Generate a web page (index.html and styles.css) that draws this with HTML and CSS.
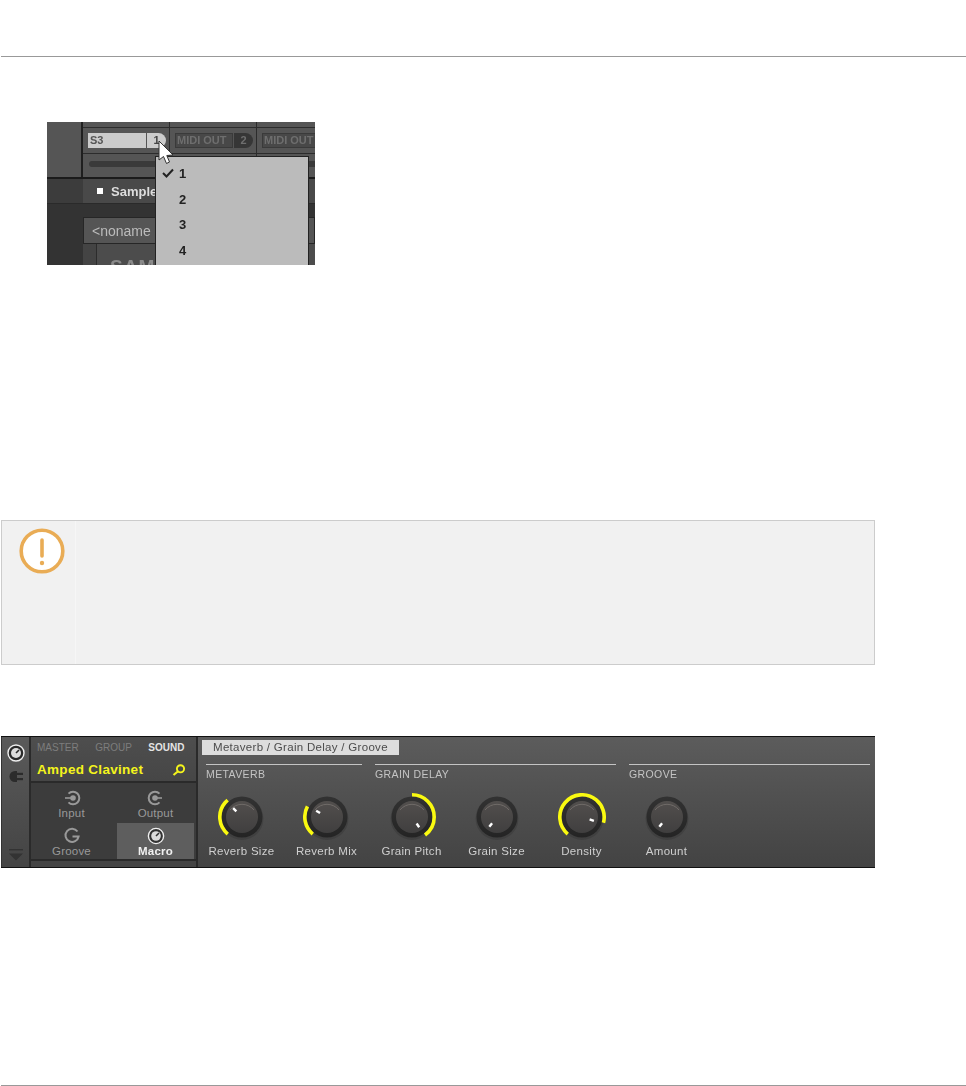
FILE: index.html
```html
<!DOCTYPE html>
<html lang="en">

<head>
    <meta charset="UTF-8">
    <title>Manual page</title>
    <link rel="stylesheet" href="styles.css">
</head>

<body>
    <svg class="defs" width="0" height="0">
        <defs>
            <linearGradient id="knobRing" x1="0" y1="0" x2="0" y2="1">
                <stop offset="0" stop-color="#323232" />
                <stop offset="1" stop-color="#242424" />
            </linearGradient>
            <linearGradient id="knobFace" x1="0" y1="0" x2="0" y2="1">
                <stop offset="0" stop-color="#524f4d" />
                <stop offset="1" stop-color="#403f3f" />
            </linearGradient>
            <g id="knobBody">
                <circle cx="24" cy="25.5" r="21.5" fill="#000" opacity="0.12" />
                <circle cx="24" cy="24" r="20.5" fill="url(#knobRing)" />
                <circle cx="24" cy="24" r="16" fill="url(#knobFace)" />
                <path d="M12 17 A15.5 15.5 0 0 1 36 17" fill="none" stroke="#77726e" stroke-width="0.8" />
            </g>
        </defs>
    </svg>

    <div class="rule"></div>

    <!-- channel strip crop -->
    <div class="crop">
        <div class="crop-strips">
            <div class="crop-corner"></div>
            <div class="strip">
                <div class="strip-top"></div>
                <div class="strip-slot">
                    <span class="field field-on">S3</span>
                    <span class="port port-on">1</span>
                </div>
                <div class="strip-slider"><span class="slider"></span></div>
            </div>
            <div class="strip">
                <div class="strip-top"></div>
                <div class="strip-slot">
                    <span class="field">MIDI OUT</span>
                    <span class="port">2</span>
                </div>
                <div class="strip-slider"><span class="slider"></span></div>
            </div>
            <div class="strip">
                <div class="strip-top"></div>
                <div class="strip-slot">
                    <span class="field">MIDI OUT</span>
                </div>
                <div class="strip-slider"><span class="slider"></span></div>
            </div>
        </div>
        <div class="sample-row">
            <div class="sample-gap"></div>
            <div class="sample-cell"><span class="sample-dot"></span>Sample</div>
        </div>
        <div class="name-area">
            <div class="name-tab">&lt;noname</div>
            <div class="sam-row">
                <div class="sam-gap"></div>
                <div class="sam-cell">SAM</div>
            </div>
        </div>

        <ul class="menu">
            <li class="menu-item">
                <svg class="check" width="12" height="10" viewBox="0 0 12 10">
                    <path d="M1 5 L4.5 8.5 L11 1.5" fill="none" stroke="#222" stroke-width="2" />
                </svg>
                1
            </li>
            <li class="menu-item">2</li>
            <li class="menu-item">3</li>
            <li class="menu-item">4</li>
        </ul>

        <svg class="pointer" width="20" height="26" viewBox="0 0 20 26">
            <path d="M2 1 L2 20 L6.5 16.5 L9.5 23.5 L12.5 22 L9.8 15.5 L16 15 Z" fill="#fff" stroke="#333" stroke-width="1" />
        </svg>
    </div>

    <!-- attention box -->
    <div class="notice">
        <div class="notice-side">
            <svg width="46" height="46" viewBox="0 0 46 46">
                <circle cx="23" cy="23" r="20.8" fill="#fff" stroke="#e9ac55" stroke-width="3.6" />
                <line x1="23" y1="12" x2="23" y2="28" stroke="#e9ac55" stroke-width="3.6" stroke-linecap="round" />
                <circle cx="23" cy="35" r="2.2" fill="#e9ac55" />
            </svg>
        </div>
        <div class="notice-body"></div>
    </div>

    <!-- plug-in panel -->
    <div class="panel">
        <div class="panel-rail">
            <svg class="rail-knob" width="18" height="18" viewBox="0 0 18 18">
                <circle cx="9" cy="9" r="8" fill="#2a2a2a" stroke="#eee" stroke-width="1.4" />
                <circle cx="9" cy="9" r="5" fill="#ddd" />
                <line x1="9" y1="9" x2="12" y2="6" stroke="#2a2a2a" stroke-width="1.6" />
            </svg>
            <svg class="rail-plug" width="14" height="11" viewBox="0 0 14 11">
                <path d="M6 0 A5.5 5.5 0 0 0 6 11 L8 11 L8 0 Z" fill="#2b2b2b" />
                <rect x="8" y="1.8" width="6" height="2.2" fill="#2b2b2b" />
                <rect x="8" y="7" width="6" height="2.2" fill="#2b2b2b" />
            </svg>
            <svg class="rail-arrow" width="14" height="12" viewBox="0 0 14 12">
                <rect x="0" y="0" width="14" height="1.4" fill="#333" />
                <path d="M0 4.5 L14 4.5 L7 11.5 Z" fill="#333" />
            </svg>
        </div>

        <div class="panel-nav">
            <div class="nav-head">
                <div class="nav-tabs">
                    <span>MASTER</span>
                    <span>GROUP</span>
                    <span class="nav-active">SOUND</span>
                </div>
                <div class="nav-title">
                    <span>Amped Clavinet</span>
                    <svg width="14" height="12" viewBox="0 0 14 12">
                        <circle cx="8.5" cy="4.8" r="3.6" fill="none" stroke="#f4f41c" stroke-width="1.9" />
                        <line x1="5.8" y1="7.5" x2="1.5" y2="11" stroke="#f4f41c" stroke-width="2.2" />
                    </svg>
                </div>
            </div>
            <div class="nav-grid">
                <div class="nav-cell">
                    <svg width="18" height="18" viewBox="0 0 18 18">
                        <path d="M5.5 4.6 A6.3 6.3 0 1 1 5.5 13.4" fill="none" stroke="#999" stroke-width="2" />
                        <circle cx="10" cy="9" r="2.8" fill="#999" />
                        <line x1="2" y1="9" x2="9" y2="9" stroke="#999" stroke-width="1.6" />
                    </svg>
                    <span>Input</span>
                </div>
                <div class="nav-cell">
                    <svg width="18" height="18" viewBox="0 0 18 18">
                        <path d="M12.5 4.6 A6.3 6.3 0 1 0 12.5 13.4" fill="none" stroke="#999" stroke-width="2" />
                        <circle cx="8" cy="9" r="2.8" fill="#999" />
                        <line x1="9" y1="9" x2="15" y2="9" stroke="#999" stroke-width="1.6" />
                    </svg>
                    <span>Output</span>
                </div>
                <div class="nav-cell">
                    <svg width="18" height="18" viewBox="0 0 18 18">
                        <path d="M14.5 4.5 A6.6 6.6 0 1 0 15.6 9.5 L9.5 9.5" fill="none" stroke="#999" stroke-width="2" />
                    </svg>
                    <span>Groove</span>
                </div>
                <div class="nav-cell nav-cell-on">
                    <svg width="18" height="18" viewBox="0 0 18 18">
                        <circle cx="9" cy="9" r="7.6" fill="#333" stroke="#eee" stroke-width="1.4" />
                        <circle cx="9" cy="9" r="4.8" fill="#ddd" />
                        <line x1="9" y1="9" x2="12" y2="6" stroke="#333" stroke-width="1.6" />
                    </svg>
                    <span>Macro</span>
                </div>
            </div>
            <div class="nav-foot"></div>
        </div>

        <div class="panel-main">
            <div class="page-tab">Metaverb / Grain Delay / Groove</div>
            <div class="sections">
                <h3 class="section section-metaverb">METAVERB</h3>
                <h3 class="section section-delay">GRAIN DELAY</h3>
                <h3 class="section section-groove">GROOVE</h3>
            </div>
            <div class="knobs">
                <div class="knob">
                    <svg width="48" height="48" viewBox="0 0 48 48">
                        <use href="#knobBody" />
                        <circle class="arc" cx="24" cy="24" r="22.2" pathLength="360" stroke-dasharray="100 360" transform="rotate(130 24 24)" />
                        <line class="tick" x1="24" y1="16" x2="24" y2="11.5" transform="rotate(-45 24 24)" />
                    </svg>
                    <span>Reverb Size</span>
                </div>
                <div class="knob">
                    <svg width="48" height="48" viewBox="0 0 48 48">
                        <use href="#knobBody" />
                        <circle class="arc" cx="24" cy="24" r="22.2" pathLength="360" stroke-dasharray="78 360" transform="rotate(130 24 24)" />
                        <line class="tick" x1="24" y1="16" x2="24" y2="11.5" transform="rotate(-60 24 24)" />
                    </svg>
                    <span>Reverb Mix</span>
                </div>
                <div class="knob">
                    <svg width="48" height="48" viewBox="0 0 48 48">
                        <use href="#knobBody" />
                        <circle class="arc" cx="24" cy="24" r="22.2" pathLength="360" stroke-dasharray="144 360" transform="rotate(-90 24 24)" />
                        <line class="tick" x1="24" y1="16" x2="24" y2="11.5" transform="rotate(145 24 24)" />
                    </svg>
                    <span>Grain Pitch</span>
                </div>
                <div class="knob">
                    <svg width="48" height="48" viewBox="0 0 48 48">
                        <use href="#knobBody" />
                        <line class="tick" x1="24" y1="16" x2="24" y2="11.5" transform="rotate(218 24 24)" />
                    </svg>
                    <span>Grain Size</span>
                </div>
                <div class="knob">
                    <svg width="48" height="48" viewBox="0 0 48 48">
                        <use href="#knobBody" />
                        <circle class="arc" cx="24" cy="24" r="22.2" pathLength="360" stroke-dasharray="245 360" transform="rotate(130 24 24)" />
                        <line class="tick" x1="24" y1="16" x2="24" y2="11.5" transform="rotate(108 24 24)" />
                    </svg>
                    <span>Density</span>
                </div>
                <div class="knob">
                    <svg width="48" height="48" viewBox="0 0 48 48">
                        <use href="#knobBody" />
                        <line class="tick" x1="24" y1="16" x2="24" y2="11.5" transform="rotate(218 24 24)" />
                    </svg>
                    <span>Amount</span>
                </div>
            </div>
        </div>
    </div>

    <div class="rule rule-bottom"></div>
</body>

</html>
```

FILE: styles.css
```css
body {
    margin: 0;
    height: 1086px;
    padding-top: 56px;
    box-sizing: border-box;
    overflow: hidden;
    background-color: #fff;
    font-family: "Liberation Sans", Arial, sans-serif;
}

.defs {
    display: block;
    height: 0;
}

.rule {
    height: 1px;
    margin-left: 1px;
    background-color: #999;
}

.rule-bottom {
    margin-top: 217px;
}

/* Channel strip crop */
.crop {
    position: relative;
    width: 268px;
    height: 143px;
    margin: 65px 0 0 47px;
    overflow: hidden;
    background-color: #333;
    filter: blur(0.5px);
}

.crop-strips {
    display: flex;
    height: 55px;
    border-bottom: 2px solid #1b1b1b;
}

.crop-corner {
    width: 34px;
    flex-shrink: 0;
    background-color: #555;
    border-right: 2px solid #1f1f1f;
}

.strip {
    width: 86px;
    flex-shrink: 0;
    background-color: #555;
    border-right: 1px solid #2c2c2c;
}

.strip-top {
    height: 5px;
    border-bottom: 1px solid #2c2c2c;
}

.strip-slot {
    display: flex;
    height: 26px;
    padding: 5px 0 0 5px;
    box-sizing: border-box;
    border-bottom: 1px solid #2c2c2c;
    font-size: 11px;
    font-weight: bold;
}

.field {
    width: 58px;
    height: 15px;
    padding-left: 1px;
    box-sizing: border-box;
    background-color: #484848;
    border: 1px solid #3a3a3a;
    line-height: 13px;
    color: #6e6e6e;
    white-space: nowrap;
}

.field-on {
    background-color: #ccc;
    border-color: #ccc;
    color: #555;
}

.port {
    width: 19px;
    height: 15px;
    margin-left: 1px;
    line-height: 15px;
    text-align: center;
    background-color: #363636;
    border-radius: 0 8px 8px 0;
    color: #6e6e6e;
}

.port-on {
    background-color: #ccc;
    color: #444;
}

.strip-slider {
    height: 22px;
    padding: 7px 0 0 6px;
    box-sizing: border-box;
}

.slider {
    display: block;
    width: 74px;
    height: 6px;
    background-color: #3a3a3a;
    border-radius: 3px;
}

.sample-row {
    display: flex;
    height: 25px;
    border-bottom: 1px solid #2a2a2a;
    box-sizing: border-box;
}

.sample-gap {
    width: 36px;
    background-color: #3c3c3c;
}

.sample-cell {
    flex: 1;
    display: flex;
    align-items: center;
    padding-left: 14px;
    background-color: #494949;
    color: #ddd;
    font-size: 13px;
    font-weight: bold;
}

.sample-dot {
    width: 6px;
    height: 6px;
    margin-right: 8px;
    background-color: #fff;
}

.name-area {
    padding: 13px 0 0 36px;
    background-color: #333;
}

.name-tab {
    height: 27px;
    line-height: 26px;
    padding-left: 8px;
    box-sizing: border-box;
    background-color: #555;
    border: 1px solid #262626;
    color: #bbb;
    font-size: 14px;
}

.sam-row {
    display: flex;
    height: 30px;
}

.sam-gap {
    width: 13px;
    background-color: #444;
    border-right: 1px solid #2c2c2c;
}

.sam-cell {
    flex: 1;
    padding: 12px 0 0 13px;
    background-color: #4c4c4c;
    color: #8a8a8a;
    font-size: 19px;
    font-weight: bold;
    letter-spacing: 1px;
}

.menu {
    position: absolute;
    left: 108px;
    top: 34px;
    width: 154px;
    height: 130px;
    margin: 0;
    padding: 4px 0 0 0;
    box-sizing: border-box;
    list-style-type: none;
    background-color: #bbb;
    border: 1px solid #222;
    color: #222;
    font-size: 13px;
    font-weight: bold;
}

.menu-item {
    position: relative;
    height: 25.7px;
    line-height: 25.7px;
    padding-left: 23px;
}

.check {
    position: absolute;
    left: 6px;
    top: 7px;
}

.pointer {
    position: absolute;
    left: 110px;
    top: 18px;
}

/* Attention box */
.notice {
    display: flex;
    height: 145px;
    margin: 255px 0 0 1px;
    width: 874px;
    box-sizing: border-box;
    background-color: #f1f1f1;
    border: 1px solid #ccc;
}

.notice-side {
    width: 74px;
    flex-shrink: 0;
    padding: 7px 0 0 17px;
    box-sizing: border-box;
    border-right: 1px solid #f6f6f6;
}

.notice-body {
    flex: 1;
}

/* Plug-in panel */
.panel {
    display: flex;
    width: 874px;
    height: 132px;
    margin: 71px 0 0 1px;
    box-sizing: border-box;
    border-top: 1px solid #111;
    border-bottom: 1px solid #111;
    color: #bbb;
    filter: blur(0.4px);
}

.panel-rail {
    width: 27px;
    flex-shrink: 0;
    display: flex;
    flex-direction: column;
    align-items: center;
    background: linear-gradient(#5a5a5a, #444);
    border-left: 1px solid #333;
    border-right: 2px solid #2a2a2a;
}

.rail-knob {
    margin-top: 7px;
}

.rail-plug {
    margin-top: 9px;
}

.rail-arrow {
    margin-top: auto;
    margin-bottom: 6px;
}

.panel-nav {
    width: 165px;
    flex-shrink: 0;
    display: flex;
    flex-direction: column;
    border-right: 2px solid #2a2a2a;
}

.nav-head {
    height: 46px;
    padding: 4px 10px 0 6px;
    box-sizing: border-box;
    background: linear-gradient(#4e4e4e, #464646);
    border-bottom: 2px solid #2a2a2a;
}

.nav-tabs {
    display: flex;
    gap: 16.5px;
    height: 14px;
    line-height: 14px;
    font-size: 10px;
    color: #7d7d7d;
}

.nav-active {
    color: #e4e4e4;
    font-weight: bold;
}

.nav-title {
    display: flex;
    justify-content: space-between;
    align-items: center;
    margin-top: 7px;
    color: #f4f41c;
    font-size: 13.5px;
    font-weight: bold;
    letter-spacing: 0.3px;
}

.nav-grid {
    flex: 1;
    display: grid;
    grid-template-columns: 77px 77px;
    grid-auto-rows: 36px;
    column-gap: 7px;
    row-gap: 2px;
    padding: 2px 0 0 2px;
    background-color: #3c3c3c;
}

.nav-cell {
    display: flex;
    flex-direction: column;
    align-items: center;
    padding-top: 4px;
    box-sizing: border-box;
    color: #999;
    font-size: 11.5px;
    line-height: 13px;
    letter-spacing: 0.2px;
}

.nav-cell-on {
    background-color: #5e5e5e;
    color: #f0f0f0;
    font-weight: bold;
}

.nav-foot {
    height: 6px;
    background-color: #444;
    border-top: 2px solid #2a2a2a;
}

.panel-main {
    flex: 1;
    padding: 3px 5px 0 1px;
    background: linear-gradient(#5c5c5c, #434343);
}

.page-tab {
    width: 197px;
    height: 15px;
    margin-left: 3px;
    padding-left: 11px;
    box-sizing: border-box;
    line-height: 15px;
    background-color: #ddd;
    color: #4c4c4c;
    font-size: 11.5px;
    letter-spacing: 0.3px;
}

.sections {
    display: flex;
    gap: 13px;
    margin: 9px 0 0 7px;
}

.section {
    height: 19px;
    margin: 0;
    line-height: 18px;
    border-top: 1px solid #c4c4c4;
    box-sizing: border-box;
    color: #c4c4c4;
    font-size: 10.5px;
    font-weight: normal;
    letter-spacing: 0.4px;
}

.section-metaverb {
    width: 156px;
}

.section-delay {
    width: 241px;
}

.section-groove {
    width: 241px;
}

.knobs {
    display: flex;
    margin-top: 10px;
}

.knob {
    width: 85px;
    display: flex;
    flex-direction: column;
    align-items: center;
    color: #cfcfcf;
    font-size: 11.5px;
    line-height: 14px;
    letter-spacing: 0.3px;
}

.knob svg {
    margin-bottom: 3px;
}

.arc {
    fill: none;
    stroke: #fafa10;
    stroke-width: 3.6;
}

.tick {
    stroke: #fff;
    stroke-width: 2.4;
}
```
